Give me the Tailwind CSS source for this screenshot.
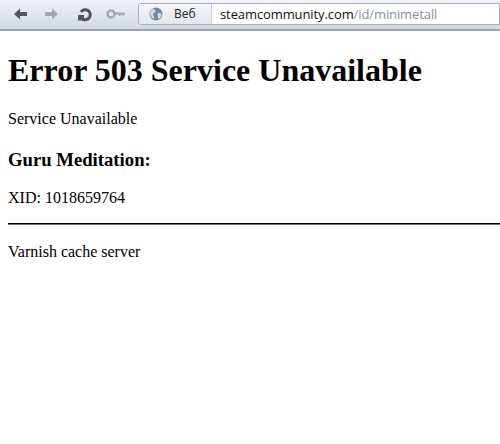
<!DOCTYPE html>
<html>
<head>
<meta charset="utf-8">
<script src="https://cdn.jsdelivr.net/npm/@tailwindcss/browser@4"></script>
</head>
<body class="bg-white text-black overflow-hidden h-[444px] font-['Liberation_Serif',serif]">
  <div class="h-[31px] border-b-2 border-[#9ea3b0] bg-gradient-to-b from-[#f1f3f8] to-[#d3d8e5] flex items-start relative">
    <svg class="absolute left-[13px] top-[7px]" width="15" height="14" viewBox="0 0 15 14"><path d="M1 7 L7 1.5 L7 5 L14 5 L14 9 L7 9 L7 12.5 Z" fill="#50555f"/></svg>
    <svg class="absolute left-[44px] top-[7px]" width="15" height="14" viewBox="0 0 15 14"><path d="M14 7 L8 1.5 L8 5 L1 5 L1 9 L8 9 L8 12.5 Z" fill="#a4a8b1"/></svg>
    <svg class="absolute left-[77px] top-[7px]" width="15" height="15" viewBox="0 0 15 15"><path d="M4 5 A5 5 0 1 1 5 11.5" fill="none" stroke="#50555f" stroke-width="3"/><path d="M1 8 L7 8 L7 13.5 L1 13.5 Z" fill="#50555f"/></svg>
    <svg class="absolute left-[106px] top-[9px]" width="20" height="10" viewBox="0 0 20 10"><circle cx="5" cy="5" r="3.5" fill="none" stroke="#a4a8b1" stroke-width="2.5"/><path d="M8 3.5 H19 V5.5 H17.5 V7 H16 V5.5 H14.5 V7 H13 V5.5 H8 Z" fill="#a4a8b1"/></svg>
    <div class="absolute left-[138px] top-[3px] w-[362px] h-[22px] border border-[#a9aebb] rounded-l-[3px] flex bg-white overflow-hidden">
      <div class="w-[73px] bg-gradient-to-b from-[#f5f6f9] to-[#e3e6ee] border-r border-[#c8ccd6] flex items-center shrink-0">
        <svg class="ml-[10px]" width="14" height="14" viewBox="0 0 14 14"><circle cx="7" cy="7" r="6.5" fill="#76869d"/><path d="M3 2.5 C5 2 7 3 6.5 4.5 C6 6 4 5.5 4 7.5 C4 9 5.5 9.5 5.5 12 C3 11 1 9 1 6.5 C1 5 2 3.5 3 2.5 Z M9 6 C11 5.5 12.5 6.5 12.5 8 C12 10 10.5 11.5 9.5 12 C9 10.5 8 8 9 6 Z" fill="#d5dbe5"/></svg>
        <span class="ml-[11px] text-[12px] leading-none text-[#222] font-['Open_Sans',sans-serif]">Веб</span>
      </div>
      <div class="pl-[8px] flex items-center text-[13px] tracking-[-0.1px] leading-none font-['Open_Sans',sans-serif] whitespace-nowrap"><span class="text-[#111]">steamcommunity.com</span><span class="text-[#8a8f99]">/id/minimetall</span></div>
    </div>
  </div>
  <main class="px-2">
    <h1 class="mt-[21px] text-[32px] leading-[37px] font-bold">Error 503 Service Unavailable</h1>
    <p class="mt-[21px] text-base leading-[18px]">Service Unavailable</p>
    <h3 class="mt-[21px] text-[18.7px] leading-[21px] font-bold">Guru Meditation:</h3>
    <p class="mt-[19px] text-base leading-[18px]">XID: 1018659764</p>
  </main>
  <div class="ml-2 mt-[16px] h-[2px] border-t-[1px] border-b-[1px] border-t-black border-b-[#777]"></div>
  <p class="px-2 mt-[18px] text-base leading-[18px]">Varnish cache server</p>
</body>
</html>
